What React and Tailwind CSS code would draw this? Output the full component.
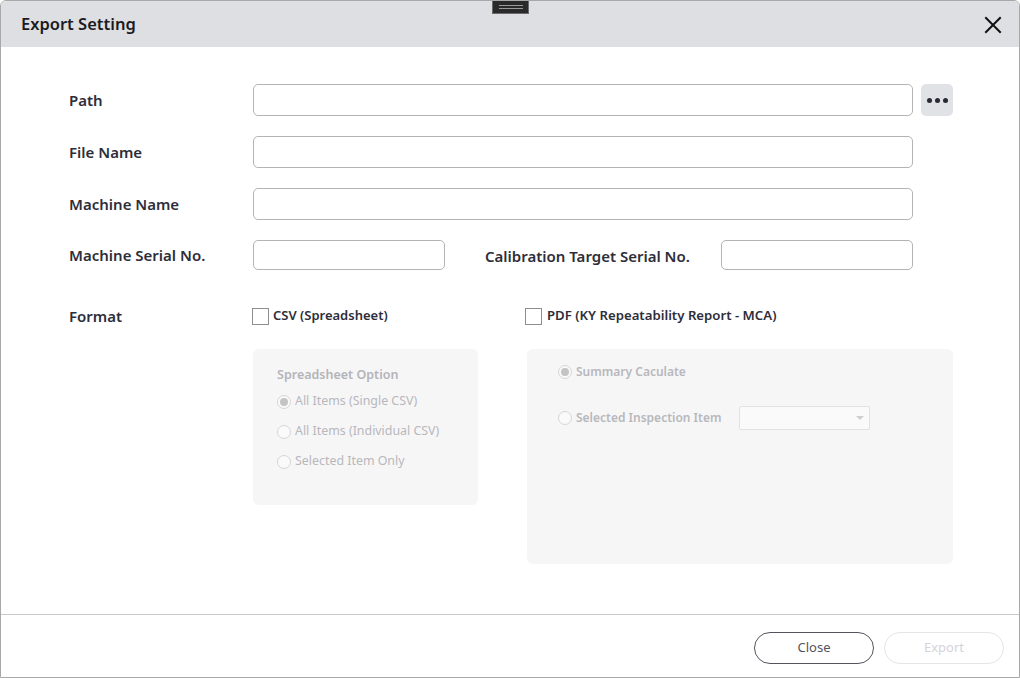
import React from "react";

function Radio({ checked, label, bold }) {
  return (
    <div className="flex items-center gap-[4px] h-[20px]">
      <span className="w-[14px] h-[14px] rounded-full border border-[#d6d6d6] bg-[#fafafa] flex items-center justify-center">
        {checked && <span className="w-[8px] h-[8px] rounded-full bg-[#c4c4c4]" />}
      </span>
      <span className={bold ? "text-[12px] font-semibold text-[#b8b8bc]" : "text-[12.4px] text-[#b8b8bc]"}>{label}</span>
    </div>
  );
}

export default function App() {
  const font = { fontFamily: '"Noto Sans", "Open Sans", sans-serif' };
  return (
    <div style={font} className="w-[1020px] h-[678px] bg-white flex flex-col border border-[#a8a8a8] rounded-t-[6px] overflow-hidden relative">
      {/* drag handle */}
      <div className="absolute left-[491px] top-0 w-[37px] h-[13px] bg-[#2a2a2a] border border-[#6a6a6a] border-t-0 flex flex-col items-center justify-center gap-[2px]">
        <span className="w-[24px] h-[1px] bg-[#9a9a9a]" />
        <span className="w-[24px] h-[1px] bg-[#9a9a9a]" />
      </div>
      {/* header */}
      <div className="h-[46px] shrink-0 bg-[#dedfe2] flex items-center justify-between pl-[20px] pr-[16px]">
        <span className="text-[16.5px] font-semibold text-[#1b1b1f]">Export Setting</span>
        <svg width="18" height="18" viewBox="0 0 18 18" className="mr-[1px] mt-[1px]">
          <path d="M2 2 L16 16 M16 2 L2 16" stroke="#111" strokeWidth="2" strokeLinecap="square" />
        </svg>
      </div>
      {/* body */}
      <div className="flex-1 pl-[68px] pt-[37px] text-[#2e2e3a]">
        <div className="flex items-center h-[32px]">
          <span className="w-[184px] text-[15px] font-semibold">Path</span>
          <div className="w-[660px] h-[32px] border border-[#b4b4b4] rounded-[5px]" />
          <div className="ml-[8px] w-[32px] h-[32px] rounded-[5px] bg-[#e1e2e6] flex items-center justify-center gap-[3px]">
            <span className="w-[5px] h-[5px] rounded-full bg-[#2a2a35]" />
            <span className="w-[5px] h-[5px] rounded-full bg-[#2a2a35]" />
            <span className="w-[5px] h-[5px] rounded-full bg-[#2a2a35]" />
          </div>
        </div>
        <div className="flex items-center h-[32px] mt-[20px]">
          <span className="w-[184px] text-[15px] font-semibold">File Name</span>
          <div className="w-[660px] h-[32px] border border-[#b4b4b4] rounded-[5px]" />
        </div>
        <div className="flex items-center h-[32px] mt-[20px]">
          <span className="w-[184px] text-[15px] font-semibold">Machine Name</span>
          <div className="w-[660px] h-[32px] border border-[#b4b4b4] rounded-[5px]" />
        </div>
        <div className="flex items-center h-[30px] mt-[20px]">
          <span className="w-[184px] text-[15px] font-semibold">Machine Serial No.</span>
          <div className="w-[192px] h-[30px] border border-[#b4b4b4] rounded-[5px]" />
          <span className="ml-[40px] w-[236px] text-[15px] font-semibold pt-[3px]">Calibration Target Serial No.</span>
          <div className="w-[192px] h-[30px] border border-[#b4b4b4] rounded-[5px]" />
        </div>
        <div className="flex items-center h-[18px] mt-[37px]">
          <span className="w-[183px] text-[15px] font-semibold">Format</span>
          <span className="w-[17px] h-[17px] border border-[#8e8e8e] bg-white" />
          <span className="ml-[4px] w-[252px] text-[13px] font-semibold">CSV (Spreadsheet)</span>
          <span className="w-[17px] h-[17px] border border-[#8e8e8e] bg-white" />
          <span className="ml-[5px] text-[13.2px] font-semibold">PDF (KY Repeatability Report - MCA)</span>
        </div>
        <div className="flex items-start mt-[24px] ml-[184px]">
          <div className="w-[225px] h-[156px] bg-[#f6f6f7] rounded-[6px] pl-[24px] pt-[17px] flex flex-col">
            <span className="text-[12.5px] font-semibold text-[#b4b4b8] mb-[7px]">Spreadsheet Option</span>
            <div className="flex flex-col gap-[10px]">
              <Radio checked label="All Items (Single CSV)" />
              <Radio label="All Items (Individual CSV)" />
              <Radio label="Selected Item Only" />
            </div>
          </div>
          <div className="ml-[49px] w-[426px] h-[215px] bg-[#f6f6f7] rounded-[6px] pl-[31px] pt-[13px] flex flex-col">
            <div className="flex items-center h-[20px]">
              <Radio checked bold label="Summary Caculate" />
            </div>
            <div className="flex items-center mt-[24px] h-[24px]">
              <div className="w-[181px]">
                <Radio bold label="Selected Inspection Item" />
              </div>
              <div className="w-[131px] h-[24px] border border-[#e2e2e2] rounded-[2px] bg-[#fafafa] flex items-center justify-end pr-[5px]">
                <svg width="8" height="5" viewBox="0 0 8 5"><path d="M0 0 L8 0 L4 4 Z" fill="#cfcfcf" /></svg>
              </div>
            </div>
          </div>
        </div>
      </div>
      {/* footer */}
      <div className="h-[63px] shrink-0 border-t border-[#c6c8cc] flex items-center justify-end gap-[10px] pr-[15px] pt-[3px]">
        <button className="w-[120px] h-[32px] rounded-full border border-[#54545e] text-[13px] text-[#54545e]">Close</button>
        <button className="w-[120px] h-[32px] rounded-full border border-[#e4e4e6] text-[13px] text-[#d4d4d8]">Export</button>
      </div>
    </div>
  );
}
